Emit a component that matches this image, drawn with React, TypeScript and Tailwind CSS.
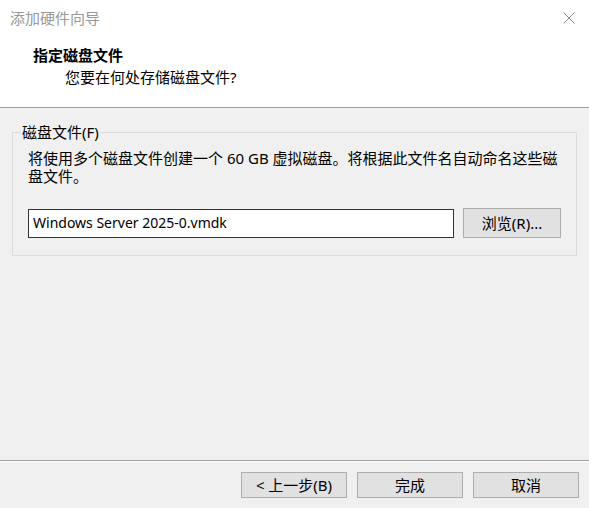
const font = "font-['Noto_Sans','Noto_Sans_CJK_SC',sans-serif]";

function CloseIcon() {
  return (
    <svg width="12" height="12" viewBox="0 0 12 12" className="block">
      <path d="M0.5 0.5 L11.5 11.5 M11.5 0.5 L0.5 11.5" stroke="#8a8a8a" strokeWidth="1" fill="none" />
    </svg>
  );
}

function WizardButton({ label }: { label: string }) {
  return (
    <button className="h-[26px] w-[106px] border border-[#adadad] bg-[#e1e1e1] text-[15px] leading-[20px] text-black">
      {label}
    </button>
  );
}

export default function App() {
  return (
    <div className={`${font} flex h-[508px] w-[589px] flex-col bg-[#f0f0f0] text-[15px] text-black`}>
      {/* header */}
      <div className="h-[108px] border-b border-[#a0a0a0] bg-white">
        <div className="flex h-[35px] items-center justify-between pl-[10px] pr-[14px]">
          <span className="leading-[20px] text-[#999999]">添加硬件向导</span>
          <CloseIcon />
        </div>
        <div className="mt-[10px] pl-[33px] font-bold leading-[20px]">指定磁盘文件</div>
        <div className="mt-[2px] pl-[65px] leading-[20px]">您要在何处存储磁盘文件?</div>
      </div>

      {/* content */}
      <fieldset className="mx-[12px] mt-[14px] border border-[#dcdcdc] px-[15px] pb-[17px]">
        <legend className="-ml-[7px] px-[1px] leading-[20px]">磁盘文件(F)</legend>
        <p className="mt-[7px] leading-[18px]">
          将使用多个磁盘文件创建一个 60 GB 虚拟磁盘。将根据此文件名自动命名这些磁
          <br />
          盘文件。
        </p>
        <div className="mt-[23px] flex items-center gap-[9px]">
          <div className="flex h-[29px] w-[426px] items-center border border-[#333333] bg-white px-[4px] text-[14px] leading-[20px]">
            Windows Server 2025-0.vmdk
          </div>
          <button className="h-[30px] w-[98px] border border-[#adadad] bg-[#e1e1e1] leading-[20px]">
            浏览(R)...
          </button>
        </div>
      </fieldset>

      <div className="flex-1" />

      {/* footer */}
      <div className="border-t border-[#a0a0a0]">
        <div className="h-px bg-white" />
        <div className="flex justify-end gap-[10px] pr-[10px] pt-[10px] pb-[10px]">
          <WizardButton label="< 上一步(B)" />
          <WizardButton label="完成" />
          <WizardButton label="取消" />
        </div>
      </div>
    </div>
  );
}
